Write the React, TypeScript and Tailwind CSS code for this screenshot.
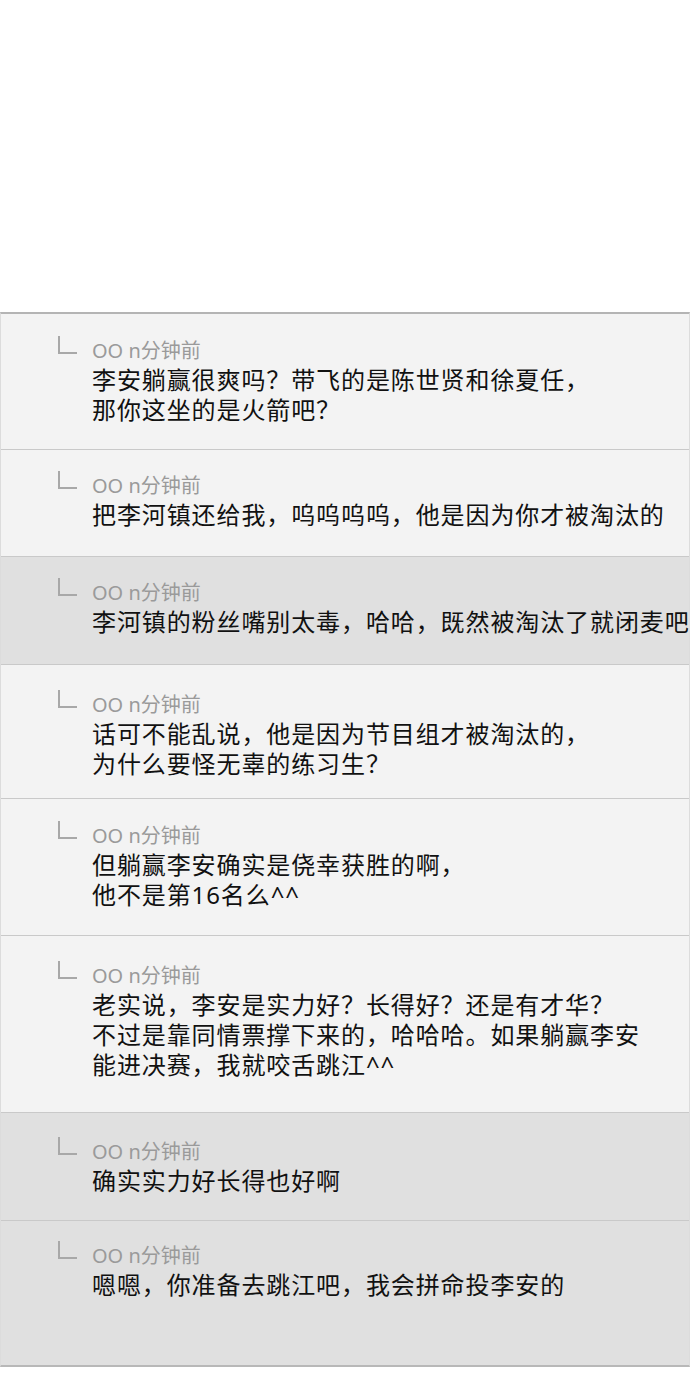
// Reply thread: a stack of nested comments, alternating light and grey rows.

interface Reply {
  lines: string[]
  shade: 'light' | 'dark'
  padTop: string
  height: string
}

const REPLIES: Reply[] = [
  { lines: ['李安躺赢很爽吗？带飞的是陈世贤和徐夏任，', '那你这坐的是火箭吧？'], shade: 'light', padTop: 'pt-[23px]', height: 'h-[136px]' },
  { lines: ['把李河镇还给我，呜呜呜呜，他是因为你才被淘汰的'], shade: 'light', padTop: 'pt-[22px]', height: 'h-[107px]' },
  { lines: ['李河镇的粉丝嘴别太毒，哈哈，既然被淘汰了就闭麦吧'], shade: 'dark', padTop: 'pt-[22px]', height: 'h-[108px]' },
  { lines: ['话可不能乱说，他是因为节目组才被淘汰的，', '为什么要怪无辜的练习生？'], shade: 'light', padTop: 'pt-[26px]', height: 'h-[134px]' },
  { lines: ['但躺赢李安确实是侥幸获胜的啊，', '他不是第16名么^^'], shade: 'light', padTop: 'pt-[23px]', height: 'h-[137px]' },
  {
    lines: ['老实说，李安是实力好？长得好？还是有才华？', '不过是靠同情票撑下来的，哈哈哈。如果躺赢李安', '能进决赛，我就咬舌跳江^^'],
    shade: 'light',
    padTop: 'pt-[26px]',
    height: 'h-[177px]',
  },
  { lines: ['确实实力好长得也好啊'], shade: 'dark', padTop: 'pt-[25px]', height: 'h-[108px]' },
  { lines: ['嗯嗯，你准备去跳江吧，我会拼命投李安的'], shade: 'dark', padTop: 'pt-[21px]', height: 'h-[144px]' },
]

function ReplyCorner() {
  return (
    <svg width="20" height="20" viewBox="0 0 20 20" className="shrink-0 mt-[-2px]">
      <path d="M1 1 V18 H19" fill="none" stroke="#a8a8a8" strokeWidth="2" />
    </svg>
  )
}

function ReplyRow({ reply, last }: { reply: Reply; last: boolean }) {
  const bg = reply.shade === 'dark' ? 'bg-[#e0e0e0]' : 'bg-[#f3f3f3]'
  return (
    <div
      className={`${bg} ${reply.height} ${reply.padTop} box-border overflow-hidden pl-[57px] flex gap-[14px] ${
        last ? '' : 'border-b border-[#c9c9c9]'
      }`}
    >
      <ReplyCorner />
      <div className="flex flex-col min-w-0">
        <div className="text-[20px] leading-[28px] text-[#9a9a9a]">OO n分钟前</div>
        {reply.lines.map((line, i) => (
          <div key={i} className="text-[24px] leading-[30px] tracking-[0.9px] text-[#111] whitespace-nowrap">
            {line}
          </div>
        ))}
      </div>
    </div>
  )
}

export default function App() {
  return (
    <div
      className="w-[690px] h-[1384px] bg-white overflow-hidden"
      style={{ fontFamily: '"Noto Sans", "Noto Sans CJK SC", sans-serif' }}
    >
      <div className="h-[312px]" />
      <div className="border-t-2 border-b-2 border-t-[#b4b4b4] border-b-[#b8b8b8] border-x border-x-[#dcdcdc]">
        {REPLIES.map((r, i) => (
          <ReplyRow key={i} reply={r} last={i === REPLIES.length - 1} />
        ))}
      </div>
    </div>
  )
}
